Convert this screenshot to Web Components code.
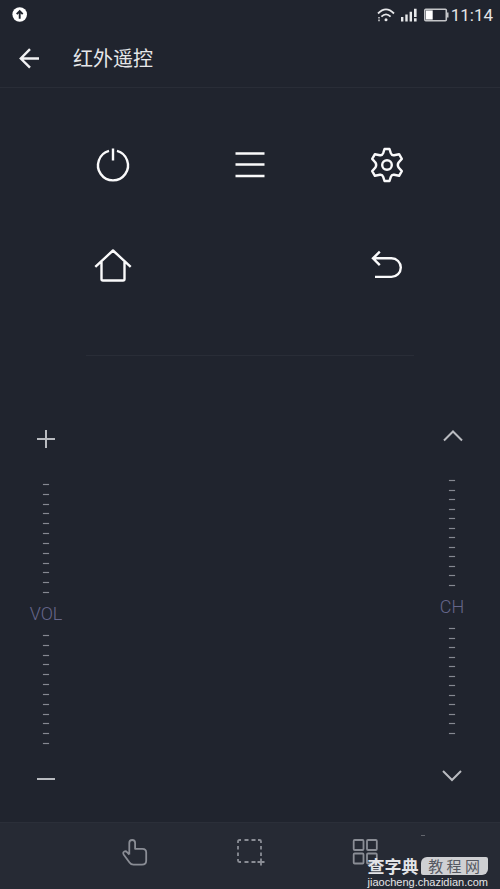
<!DOCTYPE html>
<html lang="zh-CN">
<head>
<meta charset="utf-8">
<meta name="viewport" content="width=device-width, initial-scale=1">
<title>红外遥控</title>
<style>
body { margin: 0; background: #20242e; }
</style>
</head>
<body>
<remote-app></remote-app>
<script>
const define = (name, html) => {
  const template = document.createElement('template');
  template.innerHTML = html;
  customElements.define(name, class extends HTMLElement {
    constructor() {
      super();
      this.attachShadow({ mode: 'open' }).append(template.content.cloneNode(true));
    }
  });
};

define('status-bar', `
<style>
:host { display: flex; align-items: center; height: 30px; padding: 0 7px 0 12px; }
svg { display: block; }
.right { display: flex; align-items: center; margin-left: auto; }
.wifi { margin-right: 6px; }
.signal { margin-right: 7px; }
.battery { margin-right: 2px; }
time { font: 17px/30px Roboto, sans-serif; color: #e4e5e7; }
</style>
<svg width="16" height="16" viewBox="0 0 16 16"><circle cx="7.7" cy="7.5" r="7.3" fill="#fff"/><path d="M7.7 11.8V4.6M4.7 7.2l3-3 3 3" fill="none" stroke="#20242e" stroke-width="1.9"/></svg>
<div class="right">
<svg class="wifi" width="18" height="14" viewBox="0 0 18 14" fill="none" stroke="#e6e7e9" stroke-width="1.8"><path d="M1 5.5Q9-2.6 17 5.5M4.4 8.6Q9 4 13.6 8.6"/><circle cx="9" cy="11.8" r="1.5" fill="#e6e7e9" stroke="none"/><path d="M2 9v1.6M2 11.6v1.6" stroke="#b4b6ba"/></svg>
<svg class="signal" width="16" height="14" viewBox="0 0 16 14" fill="#e6e7e9"><path d="M0 9h2.4v4.5H0zM4.3 6.5h2.4v7H4.3zM8.6 3.8H11v9.7H8.600zM13 .8h2.600V9H13zM13 10.200h2.600v3.300H13z"/></svg>
<svg class="battery" width="25" height="14" viewBox="0 0 25 14"><rect x=".8" y="1.200" width="21.500" height="11.600" rx="1" fill="none" stroke="#c4c5c8" stroke-width="1.600"/><path d="M23 4.500h1.500v5H23z" fill="#c4c5c8"/><path d="M2 2.400h6.700v9.200H2z" fill="#fff"/></svg>
<time>11:14</time>
</div>`);

define('title-bar', `
<style>
:host { display: flex; align-items: center; height: 55px; border-bottom: 1px solid #292d37; padding: 0 0 2px 13px; }
button { width: 32px; height: 32px; padding: 0; border: 0; background: none; }
svg { display: block; }
h1 { margin: 0 0 0 28px; font: 400 20px/32px "Noto Sans CJK SC", sans-serif; color: #e6e7e9; }
</style>
<button type="button" aria-label="返回上一页"><svg width="32" height="32" viewBox="0 0 32 32" fill="none" stroke="#f1f1f3" stroke-width="2.400"><path d="M26 16.500H8M17 7.200L7.800 16.500l9.200 9.200"/></svg></button>
<h1><slot></slot></h1>`);

define('icon-key', `
<style>
:host { display: block; }
button { display: grid; place-items: center; width: 48px; height: 48px; padding: 0; border: 0; background: none; color: inherit; }
</style>
<button type="button"><slot></slot></button>`);

define('key-pad', `
<style>
:host { display: grid; grid-template-columns: repeat(3, 1fr); grid-auto-rows: 101px; place-items: center; margin: 26px 9% 0; color: #fafafb; }
svg { display: block; width: 40px; height: 40px; fill: none; stroke: currentColor; stroke-width: 2.400; }
.back { grid-column: 3; }
</style>
<icon-key><svg role="img" aria-label="电源" viewBox="0 0 40 40"><path d="M16 5.900a15 15 0 1 0 8 0M20 3.500v12"/></svg></icon-key>
<icon-key><svg role="img" aria-label="菜单" viewBox="0 0 40 40"><path d="M5.500 8.500h29M5.500 19.500h29M5.500 31h29"/></svg></icon-key>
<icon-key><svg role="img" aria-label="设置" viewBox="0 0 40 40" stroke-linejoin="round"><path d="M17.500 4h5l1.300 4.200q.9 2.400 3.300 2l5-1 2.700 4.700-3.200 3.600q-1.600 2.500 0 5l3.200 3.600-2.700 4.700-5-1q-2.400-.4-3.300 2L22.500 36h-5l-1.300-4.200q-.9-2.400-3.300-2l-5 1-2.700-4.700 3.200-3.600q1.600-2.500 0-5l-3.200-3.600 2.700-4.700 5 1q2.400.4 3.300-2z"/><circle cx="20" cy="20" r="4.800"/></svg></icon-key>
<icon-key><svg role="img" aria-label="主页" viewBox="0 0 40 40" stroke-linejoin="round"><path d="M2.300 20.800L20 4.500l17.700 16.300M8.500 16V33Q8.500 34.500 10 34.500H30Q31.500 34.500 31.500 33V16"/></svg></icon-key>
<icon-key class="back"><svg role="img" aria-label="返回" viewBox="0 0 40 40"><path d="M12.800 5.700L6 12.300l6.800 6.800M6.500 12.300H24.500a9.300 9.300 0 0 1 0 18.600H8"/></svg></icon-key>`);

customElements.define('tick-scale', class extends HTMLElement {
  constructor() {
    super();
    this.attachShadow({ mode: 'open' }).innerHTML = `
<style>
:host { display: flex; flex-direction: column; justify-content: space-between; align-items: center; }
i { width: 6px; height: 1px; background: #858891; box-shadow: 0 0 1px #858891; }
</style>` + '<i></i>'.repeat(12);
  }
});

define('step-rocker', `
<style>
:host { display: flex; flex-direction: column; align-items: center; width: 52px; color: #66668a; }
button { width: 32px; height: 32px; padding: 0; border: 0; background: none; color: #b9bbc0; }
::slotted(svg) { display: block; fill: none; stroke: currentColor; stroke-width: 2; }
tick-scale { height: var(--scale, 109px); }
.up { margin-top: var(--lead, 29px); }
.down { margin-bottom: var(--foot, 19px); }
span { font: 300 18px/42px Roboto, sans-serif; }
</style>
<button type="button"><slot name="more"></slot></button>
<tick-scale class="up"></tick-scale>
<span><slot></slot></span>
<tick-scale class="down"></tick-scale>
<button type="button"><slot name="less"></slot></button>`);

define('tab-bar', `
<style>
:host { display: flex; justify-content: center; box-sizing: border-box; height: 67px; background: #262a34; border-top: 1px solid #2b2f39; color: #8a8d95; }
icon-key { display: flex; justify-content: center; flex: 0 0 23%; padding-top: 5px; }
svg { display: block; width: 32px; height: 32px; fill: none; stroke: currentColor; stroke-width: 1.800; stroke-linejoin: round; }
</style>
<icon-key><svg role="img" aria-label="手势" viewBox="0 0 32 32"><path d="M10.300 18.500V7Q10.300 4 13.200 4T16.100 7V12.800H23.500Q27.200 12.800 27.200 16.500V24.500Q27.200 28.700 23 28.700H14.500Q12 28.700 10.500 26.500L5 19Q3.300 16.500 5.300 15.500 7 14.800 8 16.200L10.300 18.500"/></svg></icon-key>
<icon-key><svg role="img" aria-label="自定义" viewBox="0 0 32 32"><path d="M4 7V5.500Q4 4 5.500 4H7M10.500 4h4M17.500 4h4M24 4h1.500Q27 4 27 5.500V7M27 10v3.500M27 16.500V20M4 10v3.500M4 16.500V20M4 23v1.500Q4 26 5.500 26H7M10.500 26h4M17.500 26h4M27 22.500v7M23.500 26h7"/></svg></icon-key>
<icon-key><svg role="img" aria-label="更多" viewBox="0 0 32 32"><rect x="4.700" y="4" width="9.800" height="10" rx="1"/><rect x="18" y="4" width="9.800" height="10" rx="1"/><rect x="4.700" y="17.500" width="9.800" height="10" rx="1"/><rect x="18" y="17.500" width="9.800" height="10" rx="1"/></svg></icon-key>`);

define('site-mark', `
<style>
:host { display: block; position: absolute; right: 12px; bottom: 1px; color: #e4e4e7; text-align: right; }
div { display: flex; align-items: center; gap: 2px; }
b { font: 700 17px/20px "Noto Sans CJK SC", sans-serif; }
span { width: 67px; border-radius: 6px 2px; background: #cfd0d3; color: #555861; font: 15px/18px "Noto Sans CJK SC", sans-serif; text-align: center; }
small { display: block; font: 11px/12px "Liberation Sans", sans-serif; }
</style>
<div><b>查字典</b><span>教 程 网</span></div>
<small>jiaocheng.chazidian.com</small>`);

define('remote-app', `
<style>
:host { display: flex; flex-direction: column; min-height: 100vh; position: relative; }
hr { width: 328px; height: 1px; margin: 39px auto 0; border: 0; background: #292d37; }
.rockers { display: flex; justify-content: space-between; align-items: flex-start; flex: 1; padding: 64px 22px 24px 20px; }
.vol { margin-top: 3px; }
.ch { --scale: 106px; --lead: 28px; --foot: 25px; }
.spark { position: absolute; right: 75px; bottom: 53px; width: 4px; height: 1px; background: #62656d; }
</style>
<status-bar></status-bar>
<title-bar>红外遥控</title-bar>
<key-pad></key-pad>
<hr>
<div class="rockers">
<step-rocker class="vol">
<svg slot="more" role="img" aria-label="音量加" width="32" height="32" viewBox="0 0 32 32"><path d="M7 16h18M16 7v18"/></svg>
VOL
<svg slot="less" role="img" aria-label="音量减" width="32" height="32" viewBox="0 0 32 32"><path d="M7 16h18"/></svg>
</step-rocker>
<step-rocker class="ch">
<svg slot="more" role="img" aria-label="频道加" width="32" height="32" viewBox="0 0 32 32"><path d="M8 20.500l9-9 9 9"/></svg>
CH
<svg slot="less" role="img" aria-label="频道减" width="32" height="32" viewBox="0 0 32 32"><path d="M7 12l9 9 9-9"/></svg>
</step-rocker>
</div>
<tab-bar></tab-bar>
<i class="spark"></i>
<site-mark></site-mark>`);
</script>
</body>
</html>
